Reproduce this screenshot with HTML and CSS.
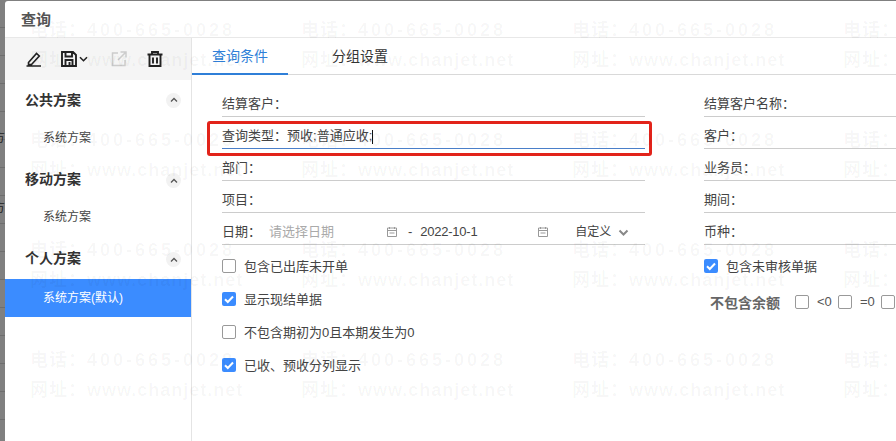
FILE: index.html
```html
<!DOCTYPE html>
<html lang="en">
<head>
   <meta charset="UTF-8">
   <meta name="viewport" content="width=device-width, initial-scale=1.0">
   <title>查询</title>
   <link rel="stylesheet" href="styles.css">
</head>
<body>
    <div class="backdrop">
        <span class="backdrop-text first">方</span>
        <span class="backdrop-text second">方</span>
    </div>
    <div class="dialog">
        <div class="dialog-title">查询</div>
        <div class="dialog-body">
            <!-- Scheme sidebar -->
            <aside class="sidebar">
                <div class="toolbar">
                    <svg class="tool-icon" viewBox="0 0 16 16"><path d="M2.500 11.500 10.500 2.500l2.800 2.500-7.800 8.500H2.500zM0.500 15h14.500" fill="none" stroke="#222" stroke-width="1.600"/></svg>
                    <svg class="tool-icon save" viewBox="0 0 16 16"><path d="M1 1h11l3 3v11H1zM4.500 1.500v4h6.500v-4M4.500 14.500v-5.500h7v5.500M8.500 11v3.500" fill="none" stroke="#222" stroke-width="1.900"/></svg>
                    <svg class="tool-caret" viewBox="0 0 9 6"><path d="M1 1.200 4.500 4.700 8 1.200" fill="none" stroke="#222" stroke-width="1.600"/></svg>
                    <svg class="tool-icon share" viewBox="0 0 16 16"><path d="M7 2H1.500v12.500H14V9M9.500 1H15v5.500M14.500 1.500 7 9" fill="none" stroke="#ccc" stroke-width="1.500"/></svg>
                    <svg class="tool-icon trash" viewBox="0 0 16 16"><path d="M0.500 3.500h15M5 3.500V1h6v2.500M2.500 3.500V15h11V3.500M6 6.500v6M10 6.500v6" fill="none" stroke="#222" stroke-width="1.900"/></svg>
                </div>
                <div class="group">
                    <div class="group-head">公共方案<span class="collapse"><svg viewBox="0 0 8 6"><path d="M1 4.500 4 1.500 7 4.500" fill="none" stroke="#555" stroke-width="1.300"/></svg></span></div>
                    <div class="group-item">系统方案</div>
                </div>
                <div class="group">
                    <div class="group-head">移动方案<span class="collapse"><svg viewBox="0 0 8 6"><path d="M1 4.500 4 1.500 7 4.500" fill="none" stroke="#555" stroke-width="1.300"/></svg></span></div>
                    <div class="group-item">系统方案</div>
                </div>
                <div class="group">
                    <div class="group-head">个人方案<span class="collapse"><svg viewBox="0 0 8 6"><path d="M1 4.500 4 1.500 7 4.500" fill="none" stroke="#555" stroke-width="1.300"/></svg></span></div>
                    <div class="group-item active">系统方案(默认)</div>
                </div>
            </aside>

            <!-- Query form -->
            <main class="content">
                <div class="tabs">
                    <div class="tab active">查询条件</div>
                    <div class="tab">分组设置</div>
                </div>
                <div class="form-columns">
                    <div class="form-left">
                        <div class="field">结算客户：</div>
                        <div class="field focused">
                            <span>查询类型：</span><span class="field-value">预收;普通应收;</span><span class="caret"></span>
                            <div class="highlight"></div>
                        </div>
                        <div class="field">部门：</div>
                        <div class="field">项目：</div>
                        <div class="field date-field">
                            <span class="date-label">日期：</span>
                            <span class="date-from">请选择日期</span>
                            <svg class="calendar" viewBox="0 0 12 12"><path d="M1.500 2h9v8.500h-9zM1.500 4.500h9M3.500 1v2M8.500 1v2M3.500 7h5" fill="none" stroke="#999" stroke-width="1"/></svg>
                            <span class="date-dash">-</span>
                            <span class="date-to">2022-10-1</span>
                            <svg class="calendar" viewBox="0 0 12 12"><path d="M1.500 2h9v8.500h-9zM1.500 4.500h9M3.500 1v2M8.500 1v2M3.500 7h5" fill="none" stroke="#999" stroke-width="1"/></svg>
                            <span class="date-range">自定义</span>
                            <svg class="range-caret" viewBox="0 0 11 7"><path d="M1.500 1.500 5.500 5.500 9.500 1.500" fill="none" stroke="#888" stroke-width="2"/></svg>
                        </div>
                        <div class="checks">
                            <label class="check"><span class="box"></span>包含已出库未开单</label>
                            <label class="check"><span class="box on"><svg viewBox="0 0 14 14"><path d="M3 7.200 5.800 10 11 4.500" fill="none" stroke="#fff" stroke-width="2"/></svg></span>显示现结单据</label>
                            <label class="check"><span class="box"></span>不包含期初为0且本期发生为0</label>
                            <label class="check"><span class="box on"><svg viewBox="0 0 14 14"><path d="M3 7.200 5.800 10 11 4.500" fill="none" stroke="#fff" stroke-width="2"/></svg></span>已收、预收分列显示</label>
                        </div>
                    </div>
                    <div class="form-right">
                        <div class="field">结算客户名称：</div>
                        <div class="field">客户：</div>
                        <div class="field">业务员：</div>
                        <div class="field">期间：</div>
                        <div class="field">币种：</div>
                        <label class="check single"><span class="box on"><svg viewBox="0 0 14 14"><path d="M3 7.200 5.800 10 11 4.500" fill="none" stroke="#fff" stroke-width="2"/></svg></span>包含未审核单据</label>
                        <div class="balance">
                            <span class="balance-label">不包含余额</span>
                            <span class="box"></span><span class="balance-op">&lt;0</span>
                            <span class="box"></span><span class="balance-op">=0</span>
                            <span class="box"></span>
                        </div>
                    </div>
                </div>
            </main>
        </div>
    </div>

    <div class="watermark" id="watermark"></div>
    <script>
        // the same two lines tile across the whole window
        const watermark = document.getElementById("watermark");
        for (let i = 0; i < 16; i++) {
            const tile = document.createElement("div");
            tile.className = "mark";
            tile.innerHTML = '<div>电话：<span class="mark-tel">400-665-0028</span></div><div>网址：<span class="mark-url">www.chanjet.net</span></div>';
            watermark.appendChild(tile);
        }
    </script>
</body>
</html>
```

FILE: styles.css
```css
* {
    margin: 0;
    padding: 0;
    box-sizing: border-box;
}

html, body {
    height: 441px;
    overflow: hidden;
}

body {
    font-family: "Liberation Sans", "Noto Sans CJK SC", sans-serif;
    font-size: 13px;
    color: #333;
    background-color: #808080;
    background-image: repeating-linear-gradient(#808080 0 27px, #6e6e6e 27px 28px);
    display: flex;
}

.backdrop {
    width: 5px;
    flex-shrink: 0;
    position: relative;
    overflow: hidden;
}

.backdrop-text {
    position: absolute;
    left: -7px;
    font-size: 12px;
    color: #222;
}

.backdrop-text.first {
    top: 128px;
}

.backdrop-text.second {
    top: 198px;
}

.dialog {
    flex: 1;
    margin-top: 1px;
    background-color: #fff;
    border-top-left-radius: 3px;
    display: flex;
    flex-direction: column;
    min-width: 0;
}

.dialog-title {
    height: 37px;
    padding: 9px 0 0 16px;
    font-size: 15px;
    line-height: 20px;
    font-weight: 700;
    color: #555;
    border-bottom: 1px solid #e8e8e8;
    flex-shrink: 0;
}

.dialog-body {
    flex: 1;
    display: flex;
    min-height: 0;
}

.sidebar {
    width: 187px;
    flex-shrink: 0;
    border-right: 1px solid #e4e4e4;
}

.toolbar {
    height: 42px;
    background-color: #f5f5f5;
    display: flex;
    align-items: center;
    padding-left: 21px;
}

.tool-icon {
    width: 16px;
    height: 16px;
    flex-shrink: 0;
}

.save {
    margin-left: 19px;
}

.tool-caret {
    width: 9px;
    height: 6px;
    margin-left: 2px;
}

.share {
    margin-left: 23px;
}

.trash {
    margin-left: 20px;
}

.group {
    height: 79px;
}

.group:first-of-type {
    border-bottom: 1px solid #f0f0f0;
}

.group-head {
    height: 38px;
    padding: 0 10px 0 20px;
    display: flex;
    align-items: center;
    justify-content: space-between;
    font-size: 14px;
    font-weight: 700;
    color: #333;
}

.collapse {
    width: 15px;
    height: 15px;
    margin-top: 2px;
    border-radius: 50%;
    background-color: #f2f2f2;
    display: flex;
    align-items: center;
    justify-content: center;
}

.group + .group .collapse {
    margin-top: 5px;
}

.collapse svg {
    width: 8px;
    height: 6px;
}

.group-item {
    height: 41px;
    line-height: 41px;
    padding-left: 38px;
    font-size: 12px;
    color: #444;
}

.group-item.active {
    height: 38px;
    line-height: 38px;
    margin-top: 3px;
    background-color: #3b8cff;
    color: #fff;
}

.content {
    flex: 1;
    min-width: 0;
    overflow: hidden;
}

.tabs {
    height: 37px;
    display: flex;
    border-bottom: 1px solid #d9d9d9;
}

.tab {
    width: 96px;
    text-align: center;
    line-height: 36px;
    font-size: 14px;
    color: #333;
}

.tab + .tab {
    margin-left: 24px;
}

.tab.active {
    color: #2f7fd8;
    border-bottom: 2px solid #2f7fd8;
    height: 37px;
}

.form-columns {
    display: flex;
    padding: 10px 0 0 30px;
}

.form-left {
    width: 423px;
    flex-shrink: 0;
}

.form-right {
    width: 240px;
    flex-shrink: 0;
    margin-left: 59px;
}

.field {
    height: 32px;
    padding-top: 7px;
    line-height: 24px;
    color: #444;
    border-bottom: 1px solid #ccc;
    position: relative;
    white-space: nowrap;
}

.field.focused {
    border-bottom-color: #4a7fc9;
}

.caret {
    display: inline-block;
    width: 1px;
    height: 14px;
    background-color: #111;
    vertical-align: middle;
}

.highlight {
    position: absolute;
    left: -15px;
    right: -7px;
    top: 4px;
    height: 35px;
    border: 3px solid #e2231a;
    border-radius: 3px;
}

.date-field {
    display: flex;
    align-items: center;
}

.date-label {
    width: 47px;
}

.date-from {
    width: 117px;
    color: #aaa;
}

.calendar {
    width: 12px;
    height: 12px;
    flex-shrink: 0;
}

.date-dash {
    margin-left: 10px;
}

.date-to {
    width: 117px;
    margin-left: 8px;
    letter-spacing: -0.25px;
}

.date-range {
    margin-left: 26px;
    font-size: 12px;
}

.range-caret {
    width: 11px;
    height: 7px;
    margin-left: 7px;
}

.checks {
    padding-top: 4px;
}

.check {
    height: 33px;
    display: flex;
    align-items: center;
    color: #444;
}

.box {
    width: 14px;
    height: 14px;
    border: 1px solid #999;
    border-radius: 2px;
    background-color: #fff;
    margin-right: 8px;
    flex-shrink: 0;
    display: inline-block;
}

.box svg {
    display: block;
    width: 14px;
    height: 14px;
}

.box.on {
    background-color: #3b8cff;
    border: none;
}

.check.single {
    margin-top: 4px;
}

.balance {
    display: flex;
    align-items: center;
    height: 33px;
    margin-left: 6px;
    margin-top: 3px;
    color: #555;
}

.balance-label {
    font-weight: 700;
    font-size: 14px;
    color: #666;
    margin-right: 15px;
}

.balance .box {
    margin-right: 0;
}

.balance-op {
    width: 29px;
    padding-left: 8px;
}

/* Watermark tiled over the whole window */
.watermark {
    position: absolute;
    top: 15px;
    left: 30px;
    right: 0;
    bottom: 0;
    overflow: hidden;
    display: grid;
    grid-template-columns: repeat(4, 271px);
    grid-auto-rows: 110px;
    pointer-events: none;
}

.mark {
    font-size: 18px;
    line-height: 30px;
    font-weight: 700;
    color: rgba(0, 0, 0, 0.04);
    white-space: nowrap;
    letter-spacing: 1px;
}

.mark-tel {
    letter-spacing: 3px;
}

.mark-url {
    letter-spacing: 1px;
}
```
